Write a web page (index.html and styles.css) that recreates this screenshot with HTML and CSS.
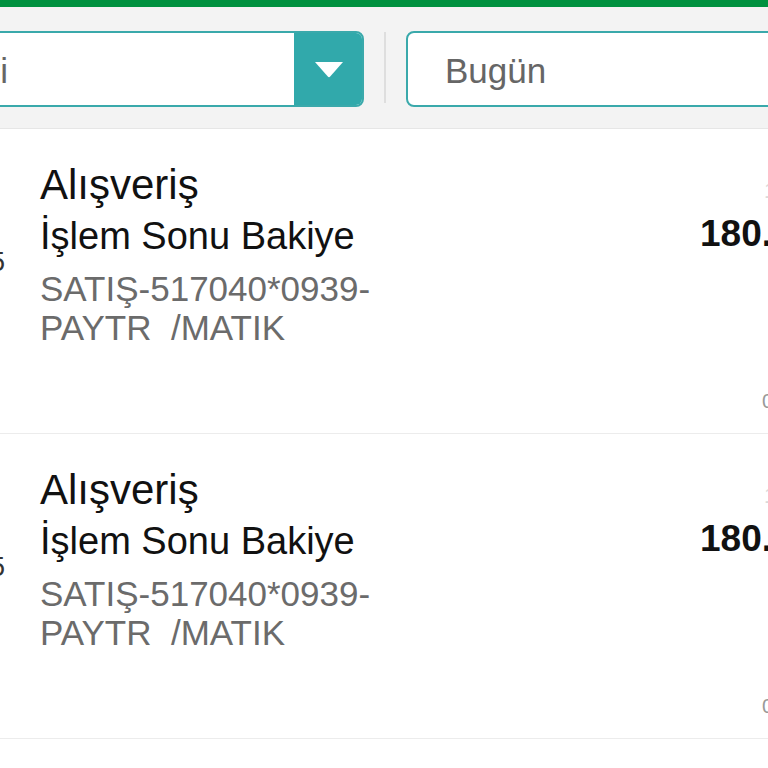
FILE: index.html
```html
<!DOCTYPE html>
<html lang="tr">
<head>
<meta charset="utf-8">
<title>Hesap Hareketleri</title>
<link rel="stylesheet" href="styles.css">
</head>
<body>
<div class="topbar"></div>
<div class="filters">
  <div class="select">
    <span class="select-text">Tüm İşlemleri</span>
    <span class="select-btn">
      <svg width="30" height="17" viewBox="0 0 30 17"><path d="M1 1 L29 1 L16.2 15.6 Q15 16.8 13.8 15.6 Z" fill="#ffffff"/></svg>
    </span>
  </div>
  <div class="divider"></div>
  <div class="input"><span class="input-text">Bugün</span></div>
</div>
<ul class="list">
  <li class="item">
    <div class="date">15</div>
    <div class="info">
      <div class="title">Alışveriş</div>
      <div class="sub">İşlem Sonu Bakiye</div>
      <div class="desc">SATIŞ-517040*0939-<br>PAYTR&nbsp; /MATIK</div>
    </div>
    <div class="amounts">
      <div class="time">14:32</div>
      <div class="amount">180.00 TL</div>
      <div class="balance">0,00 TL</div>
    </div>
  </li>
  <li class="item">
    <div class="date">15</div>
    <div class="info">
      <div class="title">Alışveriş</div>
      <div class="sub">İşlem Sonu Bakiye</div>
      <div class="desc">SATIŞ-517040*0939-<br>PAYTR&nbsp; /MATIK</div>
    </div>
    <div class="amounts">
      <div class="time">14:32</div>
      <div class="amount">180.00 TL</div>
      <div class="balance">0,00 TL</div>
    </div>
  </li>
  <li class="item">
    <div class="date">15</div>
    <div class="info">
      <div class="title">Alışveriş</div>
      <div class="sub">İşlem Sonu Bakiye</div>
      <div class="desc">SATIŞ-517040*0939-<br>PAYTR&nbsp; /MATIK</div>
    </div>
    <div class="amounts">
      <div class="time">14:32</div>
      <div class="amount">180.00 TL</div>
      <div class="balance">0,00 TL</div>
    </div>
  </li>
</ul>
</body>
</html>
```
FILE: styles.css
```css
html, body {
  margin: 0;
  padding: 0;
  background: #ffffff;
}
body {
  width: 768px;
  height: 768px;
  overflow: hidden;
  font-family: "Liberation Sans", Arial, Helvetica, sans-serif;
  color: #111111;
}
.topbar {
  height: 7px;
  background: #00913f;
}
.filters {
  display: flex;
  align-items: flex-start;
  gap: 20px;
  height: 122px;
  box-sizing: border-box;
  padding-top: 24px;
  background: #f3f3f3;
  border-bottom: 1px solid #e6e6e6;
}
.select {
  flex: none;
  display: flex;
  height: 76px;
  width: 605px;
  margin-left: -241px;
  box-sizing: border-box;
  border: 2px solid #3aa9ab;
  border-radius: 8px;
  background: #ffffff;
  overflow: hidden;
}
.select-text {
  flex: 1;
  display: flex;
  align-items: center;
  padding-left: 37px;
  padding-top: 4px;
  font-size: 35px;
  color: #666666;
  white-space: nowrap;
}
.select-btn {
  flex: none;
  width: 68px;
  display: flex;
  align-items: center;
  justify-content: center;
  background: #31a9ab;
}
.select-btn svg {
  display: block;
  margin-left: 2px;
}
.divider {
  flex: none;
  width: 2px;
  height: 71px;
  margin-top: 1px;
  background: #dedede;
}
.input {
  flex: none;
  width: 420px;
  height: 76px;
  box-sizing: border-box;
  border: 2px solid #3aa9ab;
  border-radius: 8px;
  background: #ffffff;
  display: flex;
  align-items: center;
  padding-left: 37px;
  padding-top: 4px;
}
.input-text {
  font-size: 35px;
  color: #666666;
}
.list {
  list-style: none;
  margin: 0;
  padding: 0;
}
.item {
  display: flex;
  width: 1000px;
  height: 304px;
  margin-left: -100px;
  border-bottom: 1px solid #ececec;
}
.date {
  flex: none;
  width: 105px;
  text-align: right;
  padding-top: 116px;
  font-size: 27px;
  line-height: 34px;
  color: #333333;
}
.info {
  flex: none;
  width: 660px;
  margin-left: 35px;
  padding-top: 30px;
}
.title {
  font-size: 42px;
  line-height: 52px;
}
.sub {
  font-size: 38px;
  line-height: 50px;
}
.desc {
  margin-top: 8px;
  font-size: 35px;
  line-height: 39px;
  color: #6b6b6b;
}
.amounts {
  flex: none;
  display: flex;
  flex-direction: column;
  padding-top: 30px;
}
.time {
  height: 52px;
  padding-left: 64px;
  padding-top: 20px;
  box-sizing: border-box;
  font-size: 22px;
  line-height: 24px;
  color: #dadada;
}
.amount {
  font-size: 37px;
  line-height: 46px;
  font-weight: bold;
  color: #111111;
}
.balance {
  margin-top: auto;
  margin-bottom: 22px;
  padding-left: 62px;
  font-size: 20px;
  line-height: 20px;
  color: #999999;
}
```
